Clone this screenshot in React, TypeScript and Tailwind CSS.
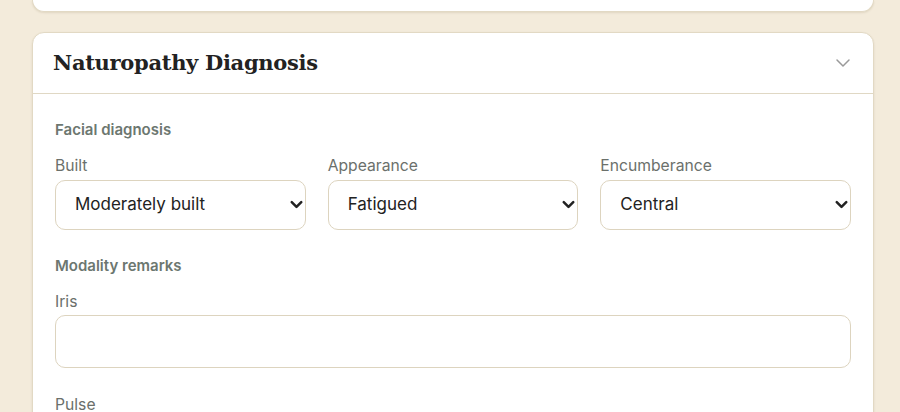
import React from 'react'
import { ChevronDown } from 'lucide-react'

const sans = { fontFamily: 'Inter, "Noto Sans", sans-serif' }

function SelectField ({ label, value }: { label: string, value: string }): React.ReactElement {
  return (
    <label className="flex flex-col">
      <span className="text-[15.7px] leading-5 text-[#6b706b] mb-1">{label}</span>
      <div className="relative">
        <select
          defaultValue={value}
          className="w-full h-[50px] appearance-none rounded-[10px] border border-[#ddd4bf] bg-white pl-[19px] pr-10 text-[17px] text-[#222] outline-none"
        >
          <option>{value}</option>
        </select>
        <ChevronDown className="absolute right-0 top-[15px] pointer-events-none text-[#222]" size={19} strokeWidth={3.2} />
      </div>
    </label>
  )
}

function TextField ({ label }: { label: string }): React.ReactElement {
  return (
    <label className="flex flex-col mb-[27px]">
      <span className="text-[15.7px] leading-5 text-[#6b706b] mb-[3px]">{label}</span>
      <input className="w-full h-[53px] rounded-[10px] border border-[#ddd4bf] bg-white px-5 text-[17px] outline-none" />
    </label>
  )
}

export default function App (): React.ReactElement {
  return (
    <div className="h-[412px] overflow-hidden bg-[#f3ebdb] pl-8 pr-[26px]" style={sans}>
      <div className="h-[12px] bg-white border border-t-0 border-[#e2d9c4] rounded-b-xl shadow-[0_1px_2px_rgba(120,100,60,0.15)]" />

      <section className="mt-5 bg-white border border-[#e2d9c4] rounded-xl shadow-[0_1px_2px_rgba(120,100,60,0.15)]">
        <header className="h-[61px] flex items-center justify-between px-5 border-b border-[#e0d8c4]">
          <h2 className="text-[21px] font-bold text-[#222]" style={{ fontFamily: '"DejaVu Serif", Georgia, serif', letterSpacing: '-0.3px' }}>
            Naturopathy Diagnosis
          </h2>
          <ChevronDown className="text-[#9a9a9a] mr-[-2px]" size={24} strokeWidth={1.5} />
        </header>

        <div className="px-[22px] pt-[26px]">
          <h3 className="text-[15px] leading-5 font-semibold text-[#6c7770] mb-4">Facial diagnosis</h3>
          <div className="grid grid-cols-3 gap-[22px]">
            <SelectField label="Built" value="Moderately built" />
            <SelectField label="Appearance" value="Fatigued" />
            <SelectField label="Encumberance" value="Central" />
          </div>

          <h3 className="text-[15px] leading-5 font-semibold text-[#6c7770] mt-[26px] mb-4">Modality remarks</h3>
          <TextField label="Iris" />
          <TextField label="Pulse" />
        </div>
      </section>
    </div>
  )
}
